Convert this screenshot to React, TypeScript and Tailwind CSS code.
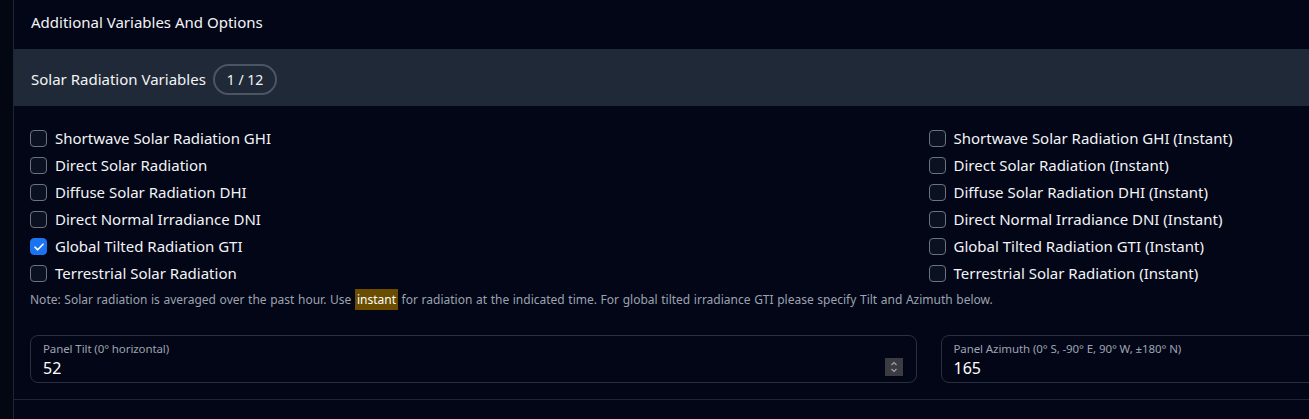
import React, { useState } from 'react';

const leftVars = [
    'Shortwave Solar Radiation GHI',
    'Direct Solar Radiation',
    'Diffuse Solar Radiation DHI',
    'Direct Normal Irradiance DNI',
    'Global Tilted Radiation GTI',
    'Terrestrial Solar Radiation',
];

const font = { fontFamily: '"Noto Sans", "Open Sans", sans-serif' };

const Check: React.FC<{ checked: boolean; onClick: () => void }> = ({ checked, onClick }) => (
    <span
        onClick={onClick}
        className={`flex h-[17px] w-[17px] shrink-0 items-center justify-center rounded-[4px] border ${checked ? 'border-[#1a73f0] bg-[#1a73f0]' : 'border-[#6b7280] bg-[#0b1120]'}`}
    >
        {checked && (
            <svg width="10" height="8" viewBox="0 0 10 8" fill="none">
                <path d="M1 4.2 3.7 6.8 9 1.2" stroke="white" strokeWidth="1.6" strokeLinecap="round" strokeLinejoin="round" />
            </svg>
        )}
    </span>
);

const Field: React.FC<{ label: string; value: string; spinner?: boolean }> = ({ label, value, spinner }) => (
    <div className="relative h-[48px] rounded-lg border border-[#2a303c] px-3 pt-[5px]">
        <div className="text-[11.5px] leading-[15px] text-[#9ca3af] tracking-[-0.1px]">{label}</div>
        <div className="mt-[2px] text-[16px] leading-[21px] text-white">{value}</div>
        {spinner && (
            <div className="absolute right-[13px] top-[22px] flex h-[18px] w-[18px] flex-col items-center justify-center bg-[#3b3b42]">
                <svg width="8" height="12" viewBox="0 0 8 12" fill="none">
                    <path d="M1.5 4 4 1.5 6.5 4M1.5 8 4 10.5 6.5 8" stroke="#a1a1aa" strokeWidth="1.2" />
                </svg>
            </div>
        )}
    </div>
);

export default function App() {
    const [checked, setChecked] = useState<string[]>(['Global Tilted Radiation GTI']);
    const toggle = (v: string) =>
        setChecked(c => (c.includes(v) ? c.filter(x => x !== v) : [...c, v]));
    const all = leftVars.flatMap(v => [v, `${v} (Instant)`]);

    return (
        <div className="h-[419px] w-[1309px] overflow-hidden bg-[#030712]" style={font}>
            <div className="ml-[13px] h-full w-[1830px] border-l border-[#1f2633] bg-[#020617]">
                <div className="h-[49px] px-[17px] pt-[11px] text-[15px] leading-[22px] text-[#f3f4f6]">
                    Additional Variables And Options
                </div>
                <div className="flex h-[57px] items-center gap-[7px] bg-[#1f2937] px-[17px] pt-[3px] text-[15px] text-[#f3f4f6]">
                    <span>Solar Radiation Variables</span>
                    <span className="flex h-[31px] items-center rounded-full border-2 border-[#4b5563] px-[12px] text-[14px]">1 / 12</span>
                </div>
                <div className="border-b border-[#1f2633] px-[16px] pb-4 pt-[19px]">
                    <div className="grid grid-cols-2">
                        {all.map(v => (
                            <label key={v} className="flex h-[27px] cursor-pointer items-center gap-[8px] text-[15px] text-[#f3f4f6]">
                                <Check checked={checked.includes(v)} onClick={() => toggle(v)} />
                                <span>{v}</span>
                            </label>
                        ))}
                    </div>
                    <p className="mt-[4px] text-[12px] leading-[18px] text-[#9ca3af] [word-spacing:0.5px]">
                        Note: Solar radiation is averaged over the past hour. Use{' '}
                        <mark className="bg-[#6b4d00] px-[2px] py-[2px] text-white">instant</mark> for radiation at the indicated
                        time. For global tilted irradiance GTI please specify Tilt and Azimuth below.
                    </p>
                    <div className="mt-[26px] grid grid-cols-2 gap-6">
                        <Field label="Panel Tilt (0° horizontal)" value="52" spinner />
                        <Field label="Panel Azimuth (0° S, -90° E, 90° W, ±180° N)" value="165" />
                    </div>
                </div>
            </div>
        </div>
    );
}
